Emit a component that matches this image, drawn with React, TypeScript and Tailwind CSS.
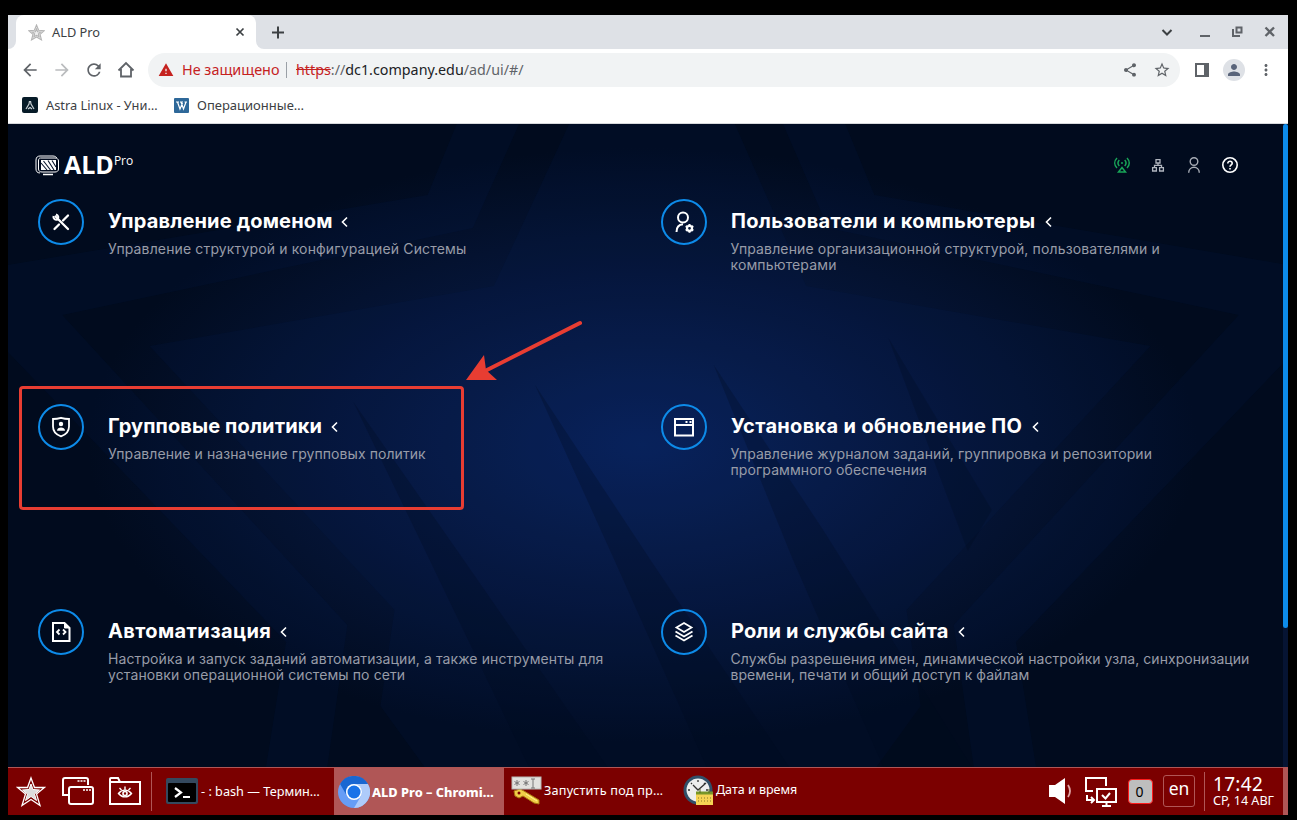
import React from "react";
import {
  MdArrowBack, MdArrowForward, MdRefresh, MdWarning, MdShare, MdStarBorder,
  MdMoreVert, MdPerson,
} from "react-icons/md";

const W = "#ffffff";

function Backdrop() {
  return (
    <svg className="absolute inset-0 h-full w-full" viewBox="8 124 1275 643" preserveAspectRatio="none">
      <defs>
        <radialGradient id="glow" gradientUnits="userSpaceOnUse" cx="0" cy="0" r="1" gradientTransform="translate(640 445) scale(650 350)">
          <stop offset="0" stopColor="#08225a" />
          <stop offset="0.3" stopColor="#071a45" />
          <stop offset="0.6" stopColor="#041230" />
          <stop offset="0.85" stopColor="#010b1e" />
          <stop offset="1" stopColor="#010b1e" />
        </radialGradient>
      </defs>
      <rect x="8" y="124" width="1275" height="643" fill="url(#glow)" />
      <path fill="#0b2a6b" fillOpacity=".1" fillRule="evenodd" d="M455 124L426 195L8 265V352L285 642L265 767H1032L1012 642L1283 358V265L871 195L842 124ZM517 124L471 228L62 315L346 625L326 767H970L950 625L1234 315L825 228L780 124Z" />
      <path fill="#0b2a6b" fillOpacity=".1" d="M567 124L492 286L149 346L393 610L379 706L423 767H873L917 706L903 610L1146 346L803 286L732 124Z" />
      <g fill="#010b1e" fillOpacity=".27">
        <path d="M352 402L462 560L605 767H527L428 560Z" />
        <path d="M533 385L648 560L786 767H704L612 560Z" />
        <path d="M711 365L820 530L968 767H880L790 560Z" />
        <path d="M885 338L988 510L964 551L930 460Z" />
      </g>
    </svg>
  );
}

function TabStrip() {
  return (
    <div className="flex h-[34px] shrink-0 items-stretch bg-white">
      <div className="w-2 rounded-br-lg bg-[#dee1e6]" />
      <div className="w-60 bg-[#dee1e6]">
        <div className="flex h-full items-center rounded-t-lg bg-white pl-3 pr-2.5">
          <svg width="17" height="17" viewBox="0 0 24 24" fill="none" stroke="#b4b4b4" strokeWidth="1.6">
            <path fill="#eee" d="M12 1.5L15 8.8L23 9.4L17 14.6L19 22.4L12 18.3L5 22.4L7 14.6L1 9.4L9 8.8Z" />
            <path d="M12 7L13.6 11L18 11.3L14.7 14L15.6 18L12 16L8.4 18L9.3 14L6 11.3L10.4 11Z" />
          </svg>
          <span className="ml-[7px] flex-1 pt-px text-[12.800px] text-[#3c4043]">ALD Pro</span>
          <svg width="12" height="12" viewBox="0 0 12 12" stroke="#3c4043" strokeWidth="1.700"><path d="M2.500 2.500L9.500 9.500M9.500 2.500L2.500 9.500" /></svg>
        </div>
      </div>
      <div className="flex flex-1 items-center rounded-bl-lg bg-[#dee1e6] pl-[13px] pr-2.5">
        <svg width="18" height="17" viewBox="0 0 18 17" stroke="#3c4043" strokeWidth="2"><path d="M9 2.500V14.500M3 8.500H15" /></svg>
        <div className="flex-1" />
        <svg width="124" height="18" viewBox="0 0 124 18" fill="none" stroke="#5f6368" strokeWidth="2">
          <path stroke="#3c4043" d="M8.500 7L13 11.500L17.500 7" />
          <path d="M46 13H56" />
          <path d="M82.500 4.500H87.500V9.500H82.500ZM79 6V13H86" />
          <path strokeWidth="2.300" d="M111.500 4.500L120 13M120 4.500L111.500 13" />
        </svg>
      </div>
    </div>
  );
}

function Toolbar() {
  return (
    <div className="flex h-[42px] shrink-0 items-center bg-white pl-3 pr-[9px]">
      <div className="flex w-32 gap-3">
        <MdArrowBack size={20} color="#5f6368" />
        <MdArrowForward size={20} color="#babcbe" />
        <MdRefresh size={20} color="#5f6368" />
        <svg width="20" height="20" viewBox="0 0 20 20" fill="none" stroke="#5f6368" strokeWidth="1.800"><path d="M2.500 10.500L10 3L17.500 10.500M5 9V16.500H15V9" /></svg>
      </div>
      <div className="flex h-[34px] w-[1032px] items-center rounded-full bg-[#f1f3f4] pl-2.5 pr-[9px] text-[14.400px]">
        <MdWarning size={16} color="#c5221f" />
        <span className="ml-2 w-[97px] whitespace-nowrap text-[#c5221f]">Не защищено</span>
        <span className="ml-[7px] mr-[9px] h-4 w-px bg-[#9aa0a6]" />
        <span className="flex-1 whitespace-nowrap text-[14.300px] text-[#5f6368]">
          <span className="text-[#c5221f] line-through">https</span>://<span className="text-[#202124]">dc1.company.edu</span>/ad/ui/#/
        </span>
        <MdShare size={16} color="#5f6368" />
        <MdStarBorder size={18} color="#5f6368" className="ml-[15px]" />
      </div>
      <svg className="ml-[15px]" width="14" height="14" viewBox="0 0 14 14"><path fill="#5f6368" fillRule="evenodd" d="M0 0H14V14H0ZM2 2V12H9V2Z" /></svg>
      <span className="ml-3.5 flex size-[22px] items-center justify-center rounded-full bg-[#dee1e6]"><MdPerson size={18} color="#59647a" /></span>
      <MdMoreVert size={18} color="#5f6368" className="ml-3" />
    </div>
  );
}

function Bookmarks() {
  return (
    <div className="flex h-[33px] shrink-0 items-center border-b border-[#d7d9dc] bg-white pb-[3px] pl-3.5 text-[13px] text-[#3c4043]">
      <svg className="-mt-px" width="16" height="16" viewBox="0 0 16 16"><rect width="16" height="16" rx="2" fill="#071b28" /><path d="M7.500 4L7 7L4 12M8.500 4L9 7L12 12M6 12L8 10.500L10 12" stroke="#c8d0d4" strokeWidth="1.200" fill="none" /></svg>
      <span className="ml-2 w-[128px] whitespace-nowrap text-[12.800px]">Astra Linux - Уни…</span>
      <svg width="15" height="15" viewBox="0 0 15 15"><rect width="15" height="15" rx="1" fill="#2e6899" /><path d="M2 4H5M6 4H9M10.500 4H13M3.500 4L6 11L8.500 5M7 4L9.500 11L12 4" stroke="#fff" strokeWidth="1.200" fill="none" /></svg>
      <span className="ml-2 whitespace-nowrap">Операционные…</span>
    </div>
  );
}

const icons: Record<string, React.ReactNode> = {
  tools: (
    <g fill="none" stroke={W} strokeLinecap="round">
      <path strokeWidth="2.300" d="M6.500 6.500L19 19" />
      <path strokeWidth="2.300" d="M5.500 19L10 14.500M14 10.500L17 7.500L19 5.500" />
      <path strokeWidth="2" strokeLinecap="butt" d="M4.500 6A3 3 0 0 0 8.500 9.500A3 3 0 0 0 7 4.500" />
    </g>
  ),
  user: (
    <g fill="none" stroke={W} strokeWidth="2">
      <circle cx="11" cy="7.500" r="5" />
      <path d="M4.500 22C4.500 17.500 7 14.600 11 14.300" />
      <circle cx="17.500" cy="18.300" r="2.500" strokeWidth="2.200" />
      <path strokeWidth="2" d="M17.500 14V15.700M17.500 21V22.700M13.700 16.200L15.200 17M19.800 19.700L21.300 20.500M13.700 20.500L15.200 19.700M19.800 17L21.300 16.200" />
    </g>
  ),
  shield: (
    <g fill="none" stroke={W} strokeWidth="1.800">
      <path d="M12 2.800Q16 4 20 4V11.500C20 17 16.500 19.800 12 21.300C7.500 19.800 4 17 4 11.500V4Q8 4 12 2.800Z" />
      <circle cx="12" cy="9" r="2.200" fill={W} stroke="none" />
      <path d="M8 15.800C8 11.500 16 11.500 16 15.800Z" fill={W} stroke="none" />
    </g>
  ),
  window: (
    <g fill="none" stroke={W} strokeWidth="2">
      <path d="M3 4H21V20.500H3ZM3 10H21" />
      <path d="M13.500 7H15.500M17.500 7H19.500" />
    </g>
  ),
  code: (
    <g fill="none" stroke={W} strokeWidth="2">
      <path d="M4 3H15.500L20.500 8V21H4Z" />
      <path fill={W} strokeWidth="1" d="M15.500 3V8H20.500Z" />
      <path d="M10.500 9.500L8 12L10.500 14.500M14 9.500L16.500 12L14 14.500" strokeWidth="1.800" />
    </g>
  ),
  layers: (
    <g fill="none" stroke={W} strokeWidth="1.800">
      <path d="M12 3L19.500 7.500L12 12L4.500 7.500Z" />
      <path d="M3.500 11.500L12 16.500L20.500 11.500M3.500 15.500L12 20.500L20.500 15.500" />
    </g>
  ),
};

type Section = { icon: string; title: string; lines: string[]; titleClass: string; textClass: string };
const sections: Section[] = [
  { icon: "tools", title: "Управление доменом", lines: ["Управление структурой и конфигурацией Системы"], titleClass: "w-[224px] tracking-[0.17px]", textClass: "tracking-[0.14px]" },
  { icon: "user", title: "Пользователи и компьютеры", lines: ["Управление организационной структурой, пользователями и", "компьютерами"], titleClass: "w-[305px] tracking-[0.32px]", textClass: "-ml-[0.5px] tracking-[0.14px]" },
  { icon: "shield", title: "Групповые политики", lines: ["Управление и назначение групповых политик"], titleClass: "w-[214px] tracking-[0.12px]", textClass: "tracking-[0.07px]" },
  { icon: "window", title: "Установка и обновление ПО", lines: ["Управление журналом заданий, группировка и репозитории", "программного обеспечения"], titleClass: "w-[292px] tracking-[0.33px]", textClass: "-ml-[0.5px] tracking-[0.08px]" },
  { icon: "code", title: "Автоматизация", lines: ["Настройка и запуск заданий автоматизации, а также инструменты для", "установки операционной системы по сети"], titleClass: "w-[163px] tracking-[0.38px]", textClass: "tracking-[0.1px]" },
  { icon: "layers", title: "Роли и службы сайта", lines: ["Службы разрешения имен, динамической настройки узла, синхронизации", "времени, печати и общий доступ к файлам"], titleClass: "w-[218px] tracking-[0.13px]", textClass: "-ml-[0.5px] tracking-[0.05px]" },
];

function SectionCard({ icon, title, lines, titleClass, textClass }: Section) {
  return (
    <div className="flex h-[205px] items-start">
      <div className="flex size-[46px] shrink-0 items-center justify-center rounded-full border-2 border-[#0d8be9]">
        <svg width="24" height="24" viewBox="0 0 24 24">{icons[icon]}</svg>
      </div>
      <div className="ml-6 pt-[9px] font-['Inter',sans-serif]">
        <div className="flex h-[26px] items-center text-white">
          <span className={`whitespace-nowrap text-[20px] font-bold leading-[26px] ${titleClass}`}>{title}</span>
          <svg className="ml-[8px] mt-0.5" width="9" height="12" viewBox="0 0 9 12" fill="none" stroke="#fff" strokeWidth="1.600"><path d="M7 1.500L2.500 6L7 10.500" /></svg>
        </div>
        <div className={`mt-[7px] whitespace-nowrap text-[14px] leading-4 text-[#989ca8] ${textClass}`}>
          {lines.map((l) => <div key={l}>{l}</div>)}
        </div>
      </div>
    </div>
  );
}

function Header() {
  return (
    <div className="flex h-[75px] items-start justify-between pl-[27px] pr-[45px] pt-[29px] font-['Open_Sans',sans-serif] text-white">
      <div className="flex items-start">
        <svg className="mt-0.5" width="25" height="21" viewBox="0 0 25 21" fill="none" stroke="#fff">
          <path d="M5 18C2 18 1 16 1 14V5C1 2 3 1 5 1H18C20 1 21 2 22 3M5.500 3H20C22 3 23.500 4 23.500 6V14C23.500 16 22 17 20 17H7C5 17 3.500 16 3.500 14V6C3.500 4 4 3 5.500 3Z" />
          <path fill="#fff" d="M6 5H21V15H6Z" stroke="none" />
          <path stroke="#07142c" strokeWidth="1.100" d="M6 8L12 15M8.500 6L15.500 15M13 5.500L19 15M17 5.500L21 12" />
          <path d="M8 19.500H18" strokeWidth="1.500" />
        </svg>
        <span className="-mt-px ml-[4px] text-[25px] font-bold leading-6">ALD</span>
        <span className="text-[12px] leading-4">Pro</span>
      </div>
      <div className="flex items-center gap-5 pt-1">
        <svg width="16" height="16" viewBox="0 0 16 16" fill="none" stroke="#18a558" strokeWidth="1.500">
          <path d="M3 1C0 4 0 8 3 11M13 1C16 4 16 8 13 11M5.300 3C3.500 5 3.500 7 5.300 9M10.700 3C12.500 5 12.500 7 10.700 9M8 10.500L11.500 15H4.500Z" /><circle cx="8" cy="6" r="1" fill="#18a558" stroke="none" />
        </svg>
        <svg width="16" height="16" viewBox="0 0 16 16" fill="none" stroke="#b0b5be" strokeWidth="1.300">
          <path d="M6 2.600H10V6H6ZM2.600 10.600H6.400V14H2.600ZM9.600 10.600H13.400V14H9.600ZM8 6V8.300M4.500 10.500V8.300H11.500V10.500" />
        </svg>
        <svg width="16" height="16" viewBox="0 0 16 16" fill="none" stroke="#a8adb6" strokeWidth="1.400">
          <circle cx="8" cy="4.500" r="3.800" /><path d="M2.700 15.700C2.700 8.500 13.300 8.500 13.300 15.700" />
        </svg>
        <svg width="16" height="16" viewBox="0 0 16 16" fill="none" stroke="#fff" strokeWidth="1.600">
          <circle cx="8" cy="8" r="7.200" /><path d="M5.800 6.400C5.800 3.400 10.200 3.600 10.200 6.300C10.200 8 8 7.800 8 9.800M8 11V12.500" />
        </svg>
      </div>
    </div>
  );
}

function Taskbar() {
  return (
    <div className="flex h-12 shrink-0 items-center border-t border-[#b05656] bg-[#7b0000] font-['Noto_Sans',sans-serif] text-[12.700px] text-white">
      <svg className="ml-2 shrink-0" width="30" height="32" viewBox="0 0 30 32" fill="none" stroke="#fff" strokeWidth="1.300">
        <path d="M15 2L18.500 11.500H28.500L20.500 18L24 29.500L15 23.500L6 29.500L9.500 18L1.500 11.500H11.500Z" />
        <path fill="#ddd" stroke="#fff" strokeWidth="1" d="M15 8L17 13.500L23.500 14L18.500 18L20.500 24.500L15 20.500L9.500 24.500L11.500 18L6.500 14L13 13.500Z" />
      </svg>
      <svg className="-mt-px ml-4 shrink-0" width="32" height="28" viewBox="0 0 32 28" fill="none" stroke="#fff" strokeWidth="2">
        <path d="M6 18H1V3Q1 1 3 1H24Q26 1 26 3V8" /><rect x="7" y="10" width="24" height="17" rx="2" />
        <path d="M15.500 4H17.500M18.500 4H20.500M21.500 4H23.500M21 13H23M24 13H26M27 13H29" strokeWidth="1.500" />
      </svg>
      <svg className="-mt-px ml-[15px] shrink-0" width="32" height="28" viewBox="0 0 32 28" fill="none" stroke="#fff" strokeWidth="2">
        <path d="M1 5V2Q1 1 2 1H9L11 5H31V27H1V5H11" /><path d="M9.500 16.500C13 12 19 12 22.500 16.500C19 21 13 21 9.500 16.500ZM10.500 11L12.500 13M16 9.500V12.500M21.500 11L19.500 13" strokeWidth="1.400" /><circle cx="16" cy="16.500" r="2" strokeWidth="1.600" />
      </svg>
      <span className="ml-[10px] h-[39px] w-px shrink-0 bg-[#b05656]" />
      <div className="flex w-[182px] shrink-0 items-center pl-3.5">
        <svg className="-mt-px" width="32" height="26" viewBox="0 0 32 26"><rect width="32" height="26" rx="2" fill="#34495e" /><rect x="2" y="5" width="28" height="19" rx="1" fill="#000" /><path d="M9 10L15 14.500L9 19M17 19H24" fill="none" stroke="#fff" strokeWidth="2.200" /></svg>
        <span className="ml-[3px] whitespace-nowrap">- : bash — Термин…</span>
      </div>
      <div className="flex h-[47px] w-[170px] shrink-0 items-center bg-[#b05656] pl-1 font-bold">
        <svg width="32" height="32" viewBox="0 0 32 32">
          <circle cx="16" cy="16" r="16" fill="#669df6" />
          <path fill="#1967d2" d="M2.100 8A16 16 0 0 1 29.900 8H16A8 8 0 0 0 9 20Z" />
          <path fill="#aecbfa" d="M29.900 8A16 16 0 0 1 16 32L23 20A8 8 0 0 0 16 8Z" />
          <circle cx="16" cy="16" r="8" fill="#fff" /><circle cx="16" cy="16" r="6.500" fill="#1a73e8" />
        </svg>
        <span className="ml-0.5 whitespace-nowrap pt-0.5 text-[12.800px] font-extrabold">ALD Pro – Chromi…</span>
      </div>
      <div className="flex w-[172px] shrink-0 items-center pl-[7px]">
        <svg className="-mt-0.5" width="32" height="30" viewBox="0 0 32 30">
          <path d="M3 15L9 13L13 15L28 24V28L23 27L12 20L8 22L4 20Z" fill="#f0ce48" stroke="#a97810" /><circle cx="8" cy="17" r="1.500" fill="#7b0000" /><path d="M15 18L26 25" stroke="#fff38e" />
          <rect x="1" y="1" width="29" height="12" fill="#e2e2df" stroke="#b8b8b4" /><path d="M6 4V10M3.500 5.500L8.500 8.500M8.500 5.500L3.500 8.500M15 4V10M12.500 5.500L17.500 8.500M17.500 5.500L12.500 8.500M20 3H24M22 3V12M20 12H24" stroke="#777" />
        </svg>
        <span className="-mt-0.5 ml-px whitespace-nowrap tracking-[0.2px]">Запустить под пр…</span>
      </div>
      <div className="flex flex-1 items-center pl-[7px]">
        <svg className="-mt-1" width="31" height="32" viewBox="0 0 31 32"><circle cx="15" cy="16" r="14.500" fill="#314f68" /><circle cx="15" cy="16" r="11.500" fill="#eee" /><path d="M15 6V8M15 24V26M5 16H7M23 16H25M8 9L9 10M22 9L21 10M10 11L15 16L23 9" stroke="#333" strokeWidth="1.300" fill="none" /><rect x="13" y="18" width="17" height="13" fill="#f6d354" /><path d="M13 19H30" stroke="#779629" strokeWidth="3" /><path d="M15 24H29M15 27H29" stroke="#877629" strokeDasharray="1 2" /><path d="M17 19V15M26 19V15" stroke="#526822" /></svg>
        <span className="-mt-0.5 ml-0.5 whitespace-nowrap text-[12.500px]">Дата и время</span>
      </div>
      <svg className="-mt-px" width="24" height="28" viewBox="0 0 24 28" fill="#fff"><path d="M1 8H7L17 1V27L7 20H1Z" /><path d="M20 8Q24 14 20 20" fill="none" stroke="#e3a9a9" strokeWidth="1.800" /></svg>
      <svg className="ml-[13px]" width="32" height="30" viewBox="0 0 32 30" fill="none" stroke="#fff" strokeWidth="2"><path d="M8 14H1V1H21V9M12 12H31V25H12ZM21.500 25V29M17 29H26M17 18L20.500 21.500L25 16M2 18V23H9M6 20L9 23L6 26" /></svg>
      <span className="ml-[11px] flex size-[25px] items-center justify-center rounded-sm border border-[#ff1c1c] bg-[#bebebe] pr-0.5 text-[14px] text-black">0</span>
      <span className="-mt-0.5 ml-2.5 flex h-8 w-8 items-center justify-center rounded-[3px] border border-[#b05656] pb-1 text-[17.500px]">en</span>
      <span className="ml-[9px] h-[39px] w-px bg-[#b05656]" />
      <div className="flex h-[47px] w-[78px] flex-col whitespace-nowrap pl-2"><span className="mt-[6px] text-[19px] leading-5 tracking-[0.3px]">17:42</span><span className="text-[12.600px] leading-[13px]">СР, 14 АВГ</span></div>
      <span className="h-[47px] w-[5px] bg-[#b05656]" />
    </div>
  );
}

export default function App() {
  return (
    <div className="relative h-[820px] w-[1297px] overflow-hidden bg-black pl-2 pr-[9px] pt-[15px] font-['Noto_Sans',sans-serif]">
      <div className="flex h-[800px] w-[1280px] flex-col">
        <TabStrip />
        <Toolbar />
        <Bookmarks />
        <main className="relative flex h-[643px] shrink-0 bg-[#010b1e]">
          <Backdrop />
          <div className="relative w-[1275px]">
            <Header />
            <div className="grid grid-cols-[623px_1fr] pl-[30px]">
              {sections.map((s) => <SectionCard key={s.title} {...s} />)}
            </div>
          </div>
          <div className="relative w-[5px] bg-[#061433]"><div className="h-[504px] rounded-full bg-[#0d8be9]" /></div>
        </main>
        <Taskbar />
      </div>
      <div className="absolute left-[19px] top-[386px] h-[124px] w-[445px] rounded-[4px] border-3 border-[#e83d32]" />
      <svg className="absolute left-[460px] top-[315px]" width="130" height="70" viewBox="0 0 130 70">
        <path d="M120 8L25 56" stroke="#e83d32" strokeWidth="4" strokeLinecap="round" />
        <path d="M6 65L24 40L26 55L37 65Z" fill="#e83d32" />
      </svg>
    </div>
  );
}
